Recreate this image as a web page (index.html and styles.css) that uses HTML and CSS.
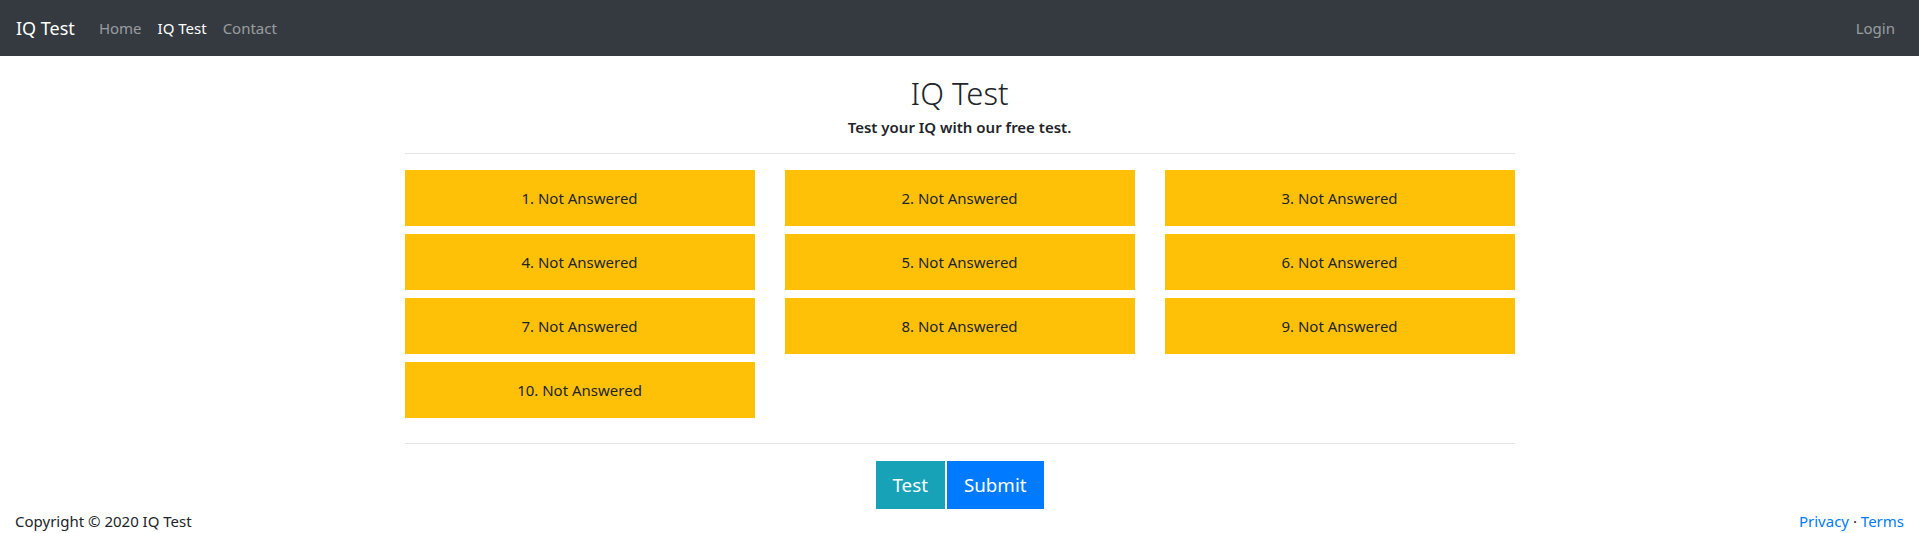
FILE: index.html
```html
<!DOCTYPE html>
<html lang="en">
<head>
<meta charset="utf-8">
<title>IQ Test</title>
<link rel="stylesheet" href="styles.css">
</head>
<body>
<nav class="navbar">
  <a class="brand" href="#">IQ Test</a>
  <ul class="nav-links">
    <li><a class="nav-link" href="#">Home</a></li>
    <li><a class="nav-link active" href="#">IQ Test</a></li>
    <li><a class="nav-link" href="#">Contact</a></li>
  </ul>
  <ul class="nav-links nav-right">
    <li><a class="nav-link" href="#">Login</a></li>
  </ul>
</nav>
<main class="container">
  <div class="header">
    <h1 class="title">IQ Test</h1>
    <p class="subtitle">Test your IQ with our free test.</p>
  </div>
  <hr class="divider">
  <div class="questions">
    <button class="q-btn">1. Not Answered</button>
    <button class="q-btn">2. Not Answered</button>
    <button class="q-btn">3. Not Answered</button>
    <button class="q-btn">4. Not Answered</button>
    <button class="q-btn">5. Not Answered</button>
    <button class="q-btn">6. Not Answered</button>
    <button class="q-btn">7. Not Answered</button>
    <button class="q-btn">8. Not Answered</button>
    <button class="q-btn">9. Not Answered</button>
    <button class="q-btn">10. Not Answered</button>
  </div>
  <hr class="divider divider-bottom">
  <div class="actions">
    <button class="act-btn act-test">Test</button>
    <button class="act-btn act-submit">Submit</button>
  </div>
</main>
<footer class="footer">
  <span class="copy">Copyright © 2020 IQ Test</span>
  <span class="footer-links"><a href="#">Privacy</a> · <a href="#">Terms</a></span>
</footer>
</body>
</html>
```
FILE: styles.css
```css
* { box-sizing: border-box; }
html, body {
  margin: 0;
  padding: 0;
}
body {
  font-family: "Noto Sans", "Open Sans", sans-serif;
  font-size: 15px;
  line-height: 24px;
  color: #212529;
  background: #fff;
}
a { text-decoration: none; }

.navbar {
  display: flex;
  align-items: center;
  background: #343a40;
  padding: 8px 16px;
  height: 56px;
}
.brand {
  color: #fff;
  font-size: 18px;
  line-height: 30px;
  padding: 5px 0;
  margin-right: 16px;
}
.nav-links {
  list-style: none;
  display: flex;
  margin: 0;
  padding: 0;
}
.nav-right { margin-left: auto; }
.nav-link {
  display: block;
  padding: 8px;
  line-height: 24px;
  color: rgba(255,255,255,.5);
}
.nav-link.active { color: #fff; }

.container {
  width: 1110px;
  margin: 0 auto;
  padding-top: 17px;
}
.header { text-align: center; }
.title {
  margin: 0 0 2px;
  font-size: 31px;
  font-weight: 300;
  line-height: 40px;
}
.subtitle {
  margin: 0;
  font-weight: 600;
}
.divider {
  border: 0;
  border-top: 1px solid rgba(0,0,0,.1);
  margin: 14px 0 16px;
}
.divider-bottom { margin: 25px 0 17px; }

.questions {
  display: grid;
  grid-template-columns: repeat(3, 350px);
  column-gap: 30px;
  row-gap: 8px;
}
.q-btn {
  font-family: inherit;
  font-size: 15px;
  line-height: 24px;
  padding: 16px;
  border: 0;
  border-radius: 0;
  background: #ffc107;
  color: #212529;
}

.actions {
  display: flex;
  justify-content: center;
  gap: 2px;
}
.act-btn {
  font-family: inherit;
  font-size: 18.75px;
  line-height: 30px;
  padding: 8px 16px;
  border: 1px solid transparent;
  border-radius: 0;
  color: #fff;
}
.act-test { background: #17a2b8; border-color: #17a2b8; }
.act-submit { background: #007bff; border-color: #007bff; }

.footer {
  display: flex;
  justify-content: space-between;
  padding: 0 15px;
}
.footer-links a { color: #007bff; }
```
